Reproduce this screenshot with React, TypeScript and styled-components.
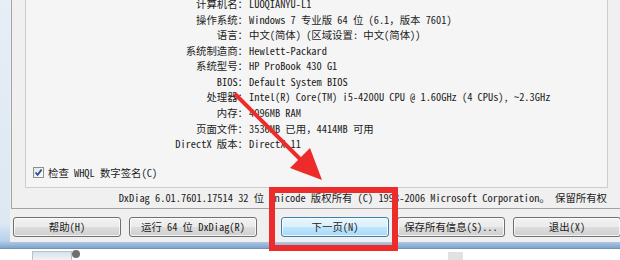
import React from "react";
import styled, { createGlobalStyle } from "styled-components";

const GlobalStyle = createGlobalStyle`
  html, body { margin: 0; padding: 0; background: #ffffff; }
  body {
    width: 620px; height: 260px; overflow: hidden; position: relative;
    font-family: "Noto Sans Mono CJK SC", "Noto Sans CJK SC", "Liberation Mono", monospace;
    font-size: 10.4px; color: #1c1c1c;
  }
`;

const Page = styled.div`
  position: relative;
  width: 620px;
  height: 260px;
  display: flex;
  flex-direction: column;
`;

const Window = styled.div`
  box-sizing: border-box;
  height: 250px;
  padding-left: 10px;
  background: linear-gradient(180deg, #e6eef6 0%, #dde8f3 90%, #b9d1ea 97%, #7fa4cc 100%);
  border-bottom: 1px solid #6f93bb;
`;

const Face = styled.div`
  box-sizing: border-box;
  height: 242px;
  background: #f0f0f0;
  padding-left: 1px;
  display: flex;
  flex-direction: column;
`;

const OuterBox = styled.div`
  box-sizing: border-box;
  height: 209px;
  border-left: 1px solid #a3a3a3;
  border-bottom: 1px solid #a3a3a3;
  padding-left: 13px;
  display: flex;
  flex-direction: column;
`;

const TabPage = styled.div`
  box-sizing: border-box;
  width: 583px;
  height: 188px;
  border: 1px solid #cdcdcd;
  border-top: none;
  background: #f5f5f5;
  overflow: hidden;
  display: flex;
  flex-direction: column;
`;

const InfoGrid = styled.div`
  display: grid;
  grid-template-columns: 222px 1fr;
  margin-top: -3.8px;
  line-height: 15.55px;
  white-space: nowrap;
`;

const Label = styled.div`
  text-align: right;
`;

const Value = styled.div`
  padding-left: 1px;
`;

const CheckRow = styled.label`
  display: flex;
  align-items: center;
  gap: 4px;
  margin-top: 13.5px;
  padding-left: 7px;
  height: 14px;
  white-space: nowrap;
`;

const CheckBox = styled.span`
  box-sizing: border-box;
  width: 11px;
  height: 11px;
  border: 1px solid #8f8f8f;
  background: linear-gradient(135deg, #e4e4e4, #ffffff);
  display: flex;
  align-items: center;
  justify-content: center;
`;

const VersionLine = styled.div`
  box-sizing: border-box;
  width: 583px;
  height: 20px;
  line-height: 20px;
  text-align: right;
  padding-right: 1px;
  white-space: nowrap;
`;

const ButtonRow = styled.div`
  display: flex;
  gap: 8px;
  padding-top: 8px;
  padding-left: 2px;
`;

const Button = styled.button<{ $w: number; $focused?: boolean; $shift?: number }>`
  box-sizing: border-box;
  flex: none;
  width: ${(p) => p.$w}px;
  height: 20px;
  margin-left: ${(p) => p.$shift ?? 0}px;
  padding: 0;
  border: 1px solid ${(p) => (p.$focused ? "#3c7fb1" : "#707070")};
  border-radius: 3px;
  background: ${(p) =>
    p.$focused
      ? "linear-gradient(180deg, #eaf6fd 0%, #d9f0fc 48%, #bee6fd 52%, #a7d9f5 100%)"
      : "linear-gradient(180deg, #f2f2f2 0%, #ebebeb 48%, #dddddd 52%, #cfcfcf 100%)"};
  box-shadow: inset 0 0 0 1px rgba(255, 255, 255, 0.75);
  font: inherit;
  color: #1c1c1c;
  line-height: 18px;
  white-space: nowrap;
`;

const Desktop = styled.div`
  flex: 1;
  background: #ffffff;
  display: flex;
  align-items: flex-start;
  padding-left: 32px;
`;

const Thumb = styled.div`
  box-sizing: border-box;
  width: 40px;
  height: 9px;
  margin-top: 2px;
  border: 1px solid #b9c3cc;
  border-bottom: none;
  background: linear-gradient(180deg, #d6e2ee, #f2f2f2);
`;

const CloseDot = styled.div`
  box-sizing: border-box;
  width: 8px;
  height: 8px;
  margin-top: 1px;
  border-radius: 50%;
  background: #6f6f6f;
`;

const GreySquare = styled.div`
  width: 15px;
  height: 8px;
  margin-top: 3px;
  margin-left: 368px;
  background: #e1e1e1;
`;

const Overlay = styled.svg`
  position: absolute;
  left: 0;
  top: 0;
  pointer-events: none;
`;

const rows: [string, string][] = [
  ["计算机名：", "LUOQIANYU-L1"],
  ["操作系统：", "Windows 7 专业版 64 位 (6.1，版本 7601)"],
  ["语言：", "中文(简体) (区域设置: 中文(简体))"],
  ["系统制造商：", "Hewlett-Packard"],
  ["系统型号：", "HP ProBook 430 G1"],
  ["BIOS：", "Default System BIOS"],
  ["处理器：", "Intel(R) Core(TM) i5-4200U CPU @ 1.60GHz (4 CPUs), ~2.3GHz"],
  ["内存：", "4096MB RAM"],
  ["页面文件：", "3536MB 已用，4414MB 可用"],
  ["DirectX 版本：", "DirectX 11"],
];

export default function App() {
  return (
    <Page>
      <GlobalStyle />
      <Window>
        <Face>
          <OuterBox>
            <TabPage>
              <InfoGrid>
                {rows.map(([l, v]) => (
                  <React.Fragment key={l}>
                    <Label>{l}</Label>
                    <Value>{v}</Value>
                  </React.Fragment>
                ))}
              </InfoGrid>
              <CheckRow>
                <CheckBox>
                  <svg width="9" height="9" viewBox="0 0 9 9">
                    <path d="M1.5 4.5 L3.6 6.8 L7.6 1.6" fill="none" stroke="#2a4fa8" strokeWidth="1.8" />
                  </svg>
                </CheckBox>
                检查 WHQL 数字签名(C)
              </CheckRow>
            </TabPage>
            <VersionLine>
              DxDiag 6.01.7601.17514 32 位 Unicode 版权所有 (C) 1998-2006 Microsoft Corporation。 保留所有权
            </VersionLine>
          </OuterBox>
          <ButtonRow>
            <Button $w={108}>帮助(H)</Button>
            <Button $w={128}>运行 64 位 DxDiag(R)</Button>
            <Button $w={108} $focused $shift={16}>下一页(N)</Button>
            <Button $w={108}>保存所有信息(S)...</Button>
            <Button $w={108}>退出(X)</Button>
          </ButtonRow>
        </Face>
      </Window>
      <Desktop>
        <Thumb />
        <CloseDot />
        <GreySquare />
      </Desktop>
      <Overlay width="620" height="260" viewBox="0 0 620 260">
        <line x1="236" y1="95" x2="302" y2="161" stroke="#ee2b2b" strokeWidth="4" strokeLinecap="round" />
        <polygon points="322,180 290,168 310,148" fill="#ee2b2b" />
        <rect x="272" y="190" width="123" height="58" fill="none" stroke="#ee2b2b" strokeWidth="6" />
      </Overlay>
    </Page>
  );
}
